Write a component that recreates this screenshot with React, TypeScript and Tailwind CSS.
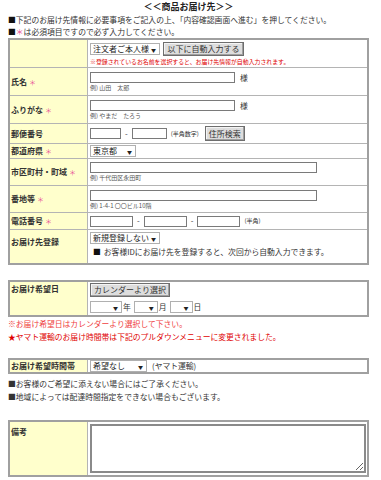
import React from "react";

const font = "font-['Noto_Sans_CJK_JP','Noto_Sans_CJK_SC',sans-serif]";

function Req() {
  return <span className="ml-[2px] text-[7px] font-normal text-[#e8559a]">＊</span>;
}

function Sel({ w, text }: { w: string; text: string }) {
  return (
    <div
      className={`${w} flex h-[12px] shrink-0 items-center justify-between border border-[#b0b0b0] bg-white pl-[2px] pr-[3px] text-[8px] leading-none text-[#222]`}
    >
      <span>{text}</span>
      <span className="text-[5px]">▼</span>
    </div>
  );
}

function Btn({ w, h, children }: { w: string; h: string; children: React.ReactNode }) {
  return (
    <button
      type="button"
      className={`${w} ${h} block shrink-0 border border-[#6e6e6e] bg-[#dddddd] text-center text-[8px] leading-none text-[#333] shadow-[inset_-1px_-1px_0_#a0a0a0,inset_1px_1px_0_#f4f4f4]`}
    >
      {children}
    </button>
  );
}

function Field({ w }: { w: string }) {
  return (
    <input
      type="text"
      className={`${w} block h-[11px] shrink-0 border border-[#7a7a7a] bg-white`}
    />
  );
}

function Label({ children, top = false, pt = "" }: { children: React.ReactNode; top?: boolean; pt?: string }) {
  return (
    <div
      className={`flex w-[78px] shrink-0 border-r border-[#b4b4b4] bg-[#ffffcc] pl-[1px] text-[8px] font-bold leading-[8px] text-[#333] ${
        top ? `items-start ${pt}` : "items-center"
      }`}
    >
      <span>{children}</span>
    </div>
  );
}

function Example({ children }: { children: React.ReactNode }) {
  return <p className="mt-[1px] text-[6px] leading-[8px] text-[#555]">{children}</p>;
}

export default function App() {
  return (
    <div className={`h-[480px] w-[381px] overflow-hidden bg-white leading-none text-[#333] ${font}`}>
      <div className="w-[369px] pl-[8px]">
        <h1 className="text-center text-[9px] font-bold leading-[14px] text-[#222]">＜＜商品お届け先＞＞</h1>
        <p className="text-[7.8px] leading-[12px]">
          <span className="text-[#111]">■</span>下記のお届け先情報に必要事項をご記入の上、「内容確認画面へ進む」を押してください。
        </p>
        <p className="text-[7.8px] leading-[12px]">
          <span className="text-[#111]">■</span>
          <span className="text-[#e8559a]">＊</span>は必須項目ですので必ず入力してください。
        </p>
      </div>

      {/* お届け先 */}
      <div className="ml-[8px] w-[361px] border-2 border-[#a0a0a0]">
        <div className="flex h-[27px]">
          <Label>{""}</Label>
          <div className="flex-1 pl-[2px] pt-[2px]">
            <div className="flex h-[14px] items-center gap-[3px]">
              <Sel w="w-[70px]" text="注文者ご本人様" />
              <Btn w="w-[81px]" h="h-[14px]">以下に自動入力する</Btn>
            </div>
            <p className="mt-[2px] text-[5.9px] leading-[8px] text-[#e00000]">
              ※登録されているお名前を選択すると、お届け先情報が自動入力されます。
            </p>
          </div>
        </div>

        <div className="flex h-[28px] border-t border-[#b4b4b4]">
          <Label>
            氏名<Req />
          </Label>
          <div className="flex-1 pl-[2px] pt-[4px]">
            <div className="flex items-center gap-[5px]">
              <Field w="w-[145px]" />
              <span className="text-[7.8px] leading-[11px]">様</span>
            </div>
            <Example>例) 山田　太郎</Example>
          </div>
        </div>

        <div className="flex h-[28px] border-t border-[#b4b4b4]">
          <Label>
            ふりがな<Req />
          </Label>
          <div className="flex-1 pl-[2px] pt-[4px]">
            <div className="flex items-center gap-[5px]">
              <Field w="w-[145px]" />
              <span className="text-[7.8px] leading-[11px]">様</span>
            </div>
            <Example>例) やまだ　たろう</Example>
          </div>
        </div>

        <div className="flex h-[20px] border-t border-[#b4b4b4]">
          <Label>郵便番号</Label>
          <div className="flex flex-1 items-center pl-[2px]">
            <Field w="w-[31px]" />
            <span className="mx-[4px] text-[7.8px]">-</span>
            <Field w="w-[35px]" />
            <span className="ml-[4px] text-[6px]">(半角数字)</span>
            <span className="w-[6px]" />
            <Btn w="w-[40px]" h="h-[15px]">住所検索</Btn>
          </div>
        </div>

        <div className="flex h-[15px] border-t border-[#b4b4b4]">
          <Label>
            都道府県<Req />
          </Label>
          <div className="flex flex-1 items-center pl-[2px]">
            <Sel w="w-[46px]" text="東京都" />
          </div>
        </div>

        <div className="flex h-[27px] border-t border-[#b4b4b4]">
          <Label>
            市区町村・町域<Req />
          </Label>
          <div className="flex-1 pl-[2px] pt-[3px]">
            <Field w="w-[227px]" />
            <Example>例) 千代田区永田町</Example>
          </div>
        </div>

        <div className="flex h-[27px] border-t border-[#b4b4b4]">
          <Label>
            番地等<Req />
          </Label>
          <div className="flex-1 pl-[2px] pt-[4px]">
            <Field w="w-[227px]" />
            <Example>例) 1-4-1 〇〇ビル10階</Example>
          </div>
        </div>

        <div className="flex h-[17px] border-t border-[#b4b4b4]">
          <Label>
            電話番号<Req />
          </Label>
          <div className="flex flex-1 items-center pl-[2px]">
            <Field w="w-[43px]" />
            <span className="mx-[4px] text-[7.8px]">-</span>
            <Field w="w-[43px]" />
            <span className="mx-[4px] text-[7.8px]">-</span>
            <Field w="w-[43px]" />
            <span className="ml-[4px] text-[6px]">(半角)</span>
          </div>
        </div>

        <div className="flex h-[34px] border-t border-[#b4b4b4]">
          <Label top pt="pt-[8px]">お届け先登録</Label>
          <div className="flex-1 pl-[2px] pt-[2px]">
            <Sel w="w-[70px]" text="新規登録しない" />
            <p className="mt-[4px] pl-[3px] text-[7.8px] leading-[8px]">
              <span className="mr-[3px] text-[#111]">■</span>お客様IDにお届け先を登録すると、次回から自動入力できます。
            </p>
          </div>
        </div>
      </div>

      {/* お届け希望日 */}
      <div className="ml-[8px] mt-[15px] flex h-[37px] w-[361px] border-2 border-[#a0a0a0]">
        <Label top pt="pt-[3px]">お届け希望日</Label>
        <div className="flex-1 pl-[2px] pt-[1px]">
          <Btn w="w-[80px]" h="h-[14px]">カレンダーより選択</Btn>
          <div className="mt-[4px] flex items-center text-[7.8px] leading-none">
            <Sel w="w-[32px]" text="" />
            <span className="ml-[1px] mr-[3px]">年</span>
            <Sel w="w-[24px]" text="" />
            <span className="ml-[1px] mr-[3px]">月</span>
            <Sel w="w-[23px]" text="" />
            <span className="ml-[1px]">日</span>
          </div>
        </div>
      </div>

      <div className="pl-[8px] text-[7.8px] leading-[13px]">
        <p className="text-[#ef4040]">※お届け希望日はカレンダーより選択して下さい。</p>
        <p className="text-[#e00000]">★ヤマト運輸のお届け時間帯は下記のプルダウンメニューに変更されました。</p>
      </div>

      {/* お届け希望時間帯 */}
      <div className="ml-[8px] mt-[15px] flex h-[16px] w-[361px] border-2 border-[#a0a0a0]">
        <Label>お届け希望時間帯</Label>
        <div className="flex flex-1 items-center pl-[2px]">
          <Sel w="w-[57px]" text="希望なし" />
          <span className="ml-[5px] text-[7.8px] leading-none">(ヤマト運輸)</span>
        </div>
      </div>

      <div className="mt-[3px] pl-[8px] text-[7.8px] leading-[13px]">
        <p>■お客様のご希望に添えない場合にはご了承ください。</p>
        <p>■地域によっては配達時間指定をできない場合もございます。</p>
      </div>

      {/* 備考 */}
      <div className="ml-[8px] mt-[17px] flex h-[57px] w-[361px] border-2 border-[#a0a0a0]">
        <Label top pt="pt-[6px]">備考</Label>
        <div className="flex-1 pl-[2px] pt-[2px]">
          <textarea className="block h-[49px] w-[276px] border-2 border-[#8a8a8a] bg-white" />
        </div>
      </div>
    </div>
  );
}
